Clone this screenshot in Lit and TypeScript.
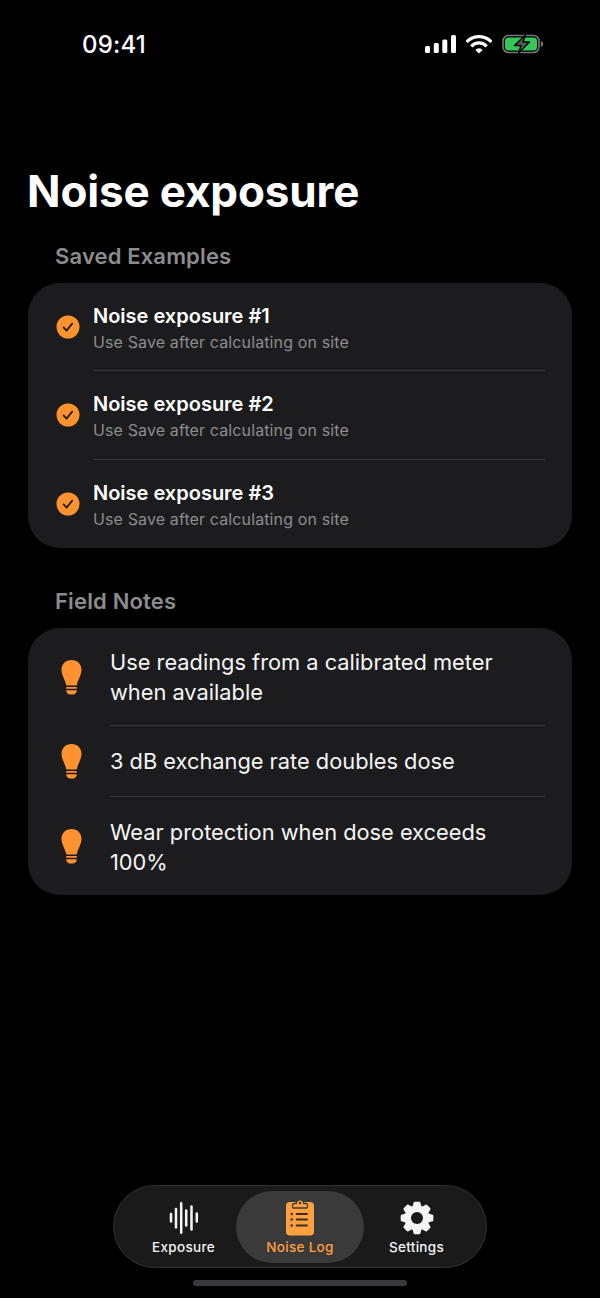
import { LitElement, html, css, svg } from "lit";
import { customElement } from "lit/decorators.js";

const saved = ["Noise exposure #1", "Noise exposure #2", "Noise exposure #3"];
const notes = [
  "Use readings from a calibrated meter when available",
  "3 dB exchange rate doubles dose",
  "Wear protection when dose exceeds 100%",
];

// eight rounded teeth around a 17,17 centre
function gearPoints() {
  const pts: string[] = [];
  for (let i = 0; i < 8; i++) {
    const a = (i * Math.PI) / 4 - Math.PI / 2;
    const at = (r: number, d: number) =>
      `${(17 + r * Math.cos(a + d)).toFixed(2)},${(17 + r * Math.sin(a + d)).toFixed(2)}`;
    pts.push(at(11.6, -0.3), at(15.4, -0.15), at(15.4, 0.15), at(11.6, 0.3));
  }
  return pts.join(" ");
}

const checkIcon = svg`<svg width="24" height="24" viewBox="0 0 24 24">
  <circle cx="12" cy="12" r="11.5" fill="#ff9230" />
  <path d="M7.600 12.400l3 3.200 5.600-7" fill="none" stroke="#1c1c1e" stroke-width="1.700" stroke-linecap="round" stroke-linejoin="round" />
</svg>`;

const bulbIcon = svg`<svg width="21" height="35" viewBox="0 0 21 35" fill="#ff9230">
  <path d="M10.500 0C4.700 0 .5 4.200 .5 9.800c0 5.400 3.200 9 4.500 14.600.2.800.6 1.100 1.300 1.100h8.400c.7 0 1.100-.3 1.300-1.100 1.300-5.600 4.500-9.200 4.500-14.600C20.500 4.200 16.300 0 10.500 0z" />
  <rect x="5" y="27" width="11" height="1.800" rx=".9" />
  <path d="M5.200 30.300h10.600c0 2.600-1.800 4.200-3.800 4.200H9c-2 0-3.800-1.600-3.800-4.200z" />
</svg>`;

const waveIcon = svg`<svg width="30" height="34" viewBox="0 0 30 34" fill="none" stroke="#f5f5f5" stroke-width="2.500" stroke-linecap="round">
  <path d="M2 13v7.500M7 8v18.500M12.200 2.200v29.600M17.200 9.500v15M22.500 5.500v23M27.800 12.500v8" />
</svg>`;

const clipboardIcon = svg`<svg width="28" height="39" viewBox="0 0 28 39">
  <rect x="0" y="4" width="28" height="33.500" rx="4" fill="#ffa040" />
  <path d="M6.500 9V7.200c0-1 .8-1.700 1.700-1.700h2c.3-2.200 1.800-3.700 3.800-3.700s3.500 1.500 3.800 3.700h2c.9 0 1.700.7 1.700 1.700V9c0 .6-.5 1-1 1h-13c-.5 0-1-.4-1-1z" fill="#ffa040" stroke="#3a3a3a" stroke-width="1.300" />
  <circle cx="14" cy="5" r="1.300" fill="#3a3a3a" />
  <g fill="#3b2c1c">
    <circle cx="5.700" cy="16" r="1.200" /><circle cx="5.700" cy="21.500" r="1.200" /><circle cx="5.700" cy="27.500" r="1.200" />
    <rect x="9.700" y="15.100" width="12.300" height="1.800" rx=".9" /><rect x="9.700" y="20.600" width="12.300" height="1.800" rx=".9" /><rect x="9.700" y="26.600" width="12.300" height="1.800" rx=".9" />
  </g>
</svg>`;

const gearIcon = svg`<svg width="34" height="34" viewBox="0 0 34 34">
  <polygon points=${gearPoints()} fill="#f5f5f5" stroke="#f5f5f5" stroke-width="2.200" stroke-linejoin="round" />
  <circle cx="17" cy="17" r="6" fill="#1a1a1b" />
</svg>`;

@customElement("app-root")
export class AppRoot extends LitElement {
  static styles = css`
    :host {
      display: block;
      width: 600px;
      height: 1298px;
      background: #000;
      color: #fff;
      font-family: Inter, "Liberation Sans", sans-serif;
      overflow: hidden;
    }

    .page {
      display: flex;
      flex-direction: column;
      height: 1298px;
    }

    .status {
      display: flex;
      justify-content: space-between;
      align-items: center;
      height: 28px;
      padding: 30px 56px 0 82px;
    }

    .time {
      font-size: 24px;
      font-weight: 500;
      letter-spacing: 0.2px;
    }

    .status-icons {
      display: flex;
      align-items: center;
      gap: 10px;
    }

    h1 {
      margin: 106px 0 0 27px;
      font-size: 44px;
      line-height: 54px;
      font-weight: 700;
      letter-spacing: -0.15px;
    }

    .section {
      margin: 24px 0 0 55px;
      font-size: 22px;
      line-height: 28px;
      font-weight: 600;
      letter-spacing: 0.15px;
      color: #8c8c8e;
    }

    .section.second {
      margin-top: 39px;
    }

    .card {
      margin: 13px 28px 0;
      padding: 0 27px 0 0;
      background: #1c1c1e;
      border-radius: 32px;
    }

    .row {
      display: flex;
      align-items: center;
    }

    .saved .row {
      height: 88.33px;
    }

    .notes .row {
      min-height: 71px;
    }

    .row-icon {
      flex: none;
      display: flex;
      justify-content: center;
      align-items: center;
      box-sizing: border-box;
    }

    .saved .row-icon {
      width: 65px;
      padding-left: 15px;
    }

    .notes .row-icon {
      width: 82px;
      padding: 1px 0 0 4px;
    }

    .row-body {
      flex: 1;
      align-self: stretch;
      box-sizing: border-box;
      display: flex;
      flex-direction: column;
      justify-content: center;
      border-bottom: 1px solid #38383a;
    }

    .saved .row-body {
      padding-top: 2px;
    }

    .row:last-child .row-body {
      border-bottom: none;
    }

    .name {
      font-size: 20px;
      line-height: 26px;
      font-weight: 600;
    }

    .sub {
      margin-top: 2px;
      font-size: 16px;
      line-height: 22px;
      color: #8c8c8e;
      letter-spacing: 0.12px;
    }

    .note {
      padding: 19px 0 18px;
      font-size: 21.8px;
      line-height: 30px;
      color: #f5f5f5;
    }

    .row:last-child .note {
      padding: 20px 0 18px;
    }

    .spacer {
      flex: 1;
    }

    .tabbar {
      align-self: center;
      display: flex;
      align-items: center;
      width: 374px;
      height: 83px;
      box-sizing: border-box;
      padding: 0 17px;
      border: 1px solid #333;
      border-radius: 42px;
      background: #1a1a1b;
    }

    .tab {
      display: flex;
      flex-direction: column;
      align-items: center;
      justify-content: center;
      height: 72px;
      border-radius: 36px;
      font-size: 13.5px;
      line-height: 16px;
      font-weight: 500;
      color: #f5f5f5;
      letter-spacing: 0.3px;
    }

    .tab-icon {
      height: 39px;
      margin-bottom: 2px;
      display: flex;
      align-items: center;
    }

    .tab.one { width: 105px; }
    .tab.two { width: 128px; background: #3a3a3a; color: #ffa040; }
    .tab.three { flex: 1; }

    .home {
      align-self: center;
      width: 214px;
      height: 6px;
      margin: 12px 0;
      border-radius: 3px;
      background: #3a3a3c;
    }
  `;

  render() {
    return html`
      <div class="page">
        <div class="status">
          <span class="time">09:41</span>
          <span class="status-icons">
            <svg width="31" height="18" viewBox="0 0 31 18" fill="#fff">
              <rect x="0" y="11" width="5" height="7" rx="1.500" />
              <rect x="8.800" y="8" width="5" height="10" rx="1.500" />
              <rect x="17.300" y="4.500" width="5" height="13.500" rx="1.500" />
              <rect x="26" y="0" width="5" height="18" rx="1.500" />
            </svg>
            <svg width="26" height="19" viewBox="0 0 26 19">
              <path d="M.6 7a16.900 16.900 0 0 1 24.800 0M5.300 11.300a10.500 10.500 0 0 1 15.400 0" fill="none" stroke="#fff" stroke-width="3.200" />
              <path d="M13 18.500L9.300 15a5 5 0 0 1 7.400 0z" fill="#fff" />
            </svg>
            <svg width="42" height="20" viewBox="0 0 42 20">
              <rect x="1" y="1.500" width="36" height="17" rx="5.500" fill="none" stroke="#77777b" stroke-width="1.600" />
              <rect x="3" y="3.500" width="32" height="13" rx="3.500" fill="#34c759" />
              <path d="M38.800 7v6c1.500-.4 2.400-1.600 2.400-3s-.9-2.600-2.400-3z" fill="#77777b" />
              <path d="M23.500 1L12.500 11.500h6.500l-2.500 7.500 11-11h-6.500z" fill="#5a5a5c" stroke="#000" stroke-width="1.400" stroke-linejoin="round" />
            </svg>
          </span>
        </div>

        <h1>Noise exposure</h1>

        <div class="section">Saved Examples</div>
        <div class="card saved">
          ${saved.map(
            (name) => html`
              <div class="row">
                <div class="row-icon">${checkIcon}</div>
                <div class="row-body">
                  <div class="name">${name}</div>
                  <div class="sub">Use Save after calculating on site</div>
                </div>
              </div>
            `
          )}
        </div>

        <div class="section second">Field Notes</div>
        <div class="card notes">
          ${notes.map(
            (note) => html`
              <div class="row">
                <div class="row-icon">${bulbIcon}</div>
                <div class="row-body">
                  <div class="note">${note}</div>
                </div>
              </div>
            `
          )}
        </div>

        <div class="spacer"></div>

        <nav class="tabbar">
          <div class="tab one"><span class="tab-icon">${waveIcon}</span><span>Exposure</span></div>
          <div class="tab two"><span class="tab-icon">${clipboardIcon}</span><span>Noise Log</span></div>
          <div class="tab three"><span class="tab-icon">${gearIcon}</span><span>Settings</span></div>
        </nav>
        <div class="home"></div>
      </div>
    `;
  }
}
